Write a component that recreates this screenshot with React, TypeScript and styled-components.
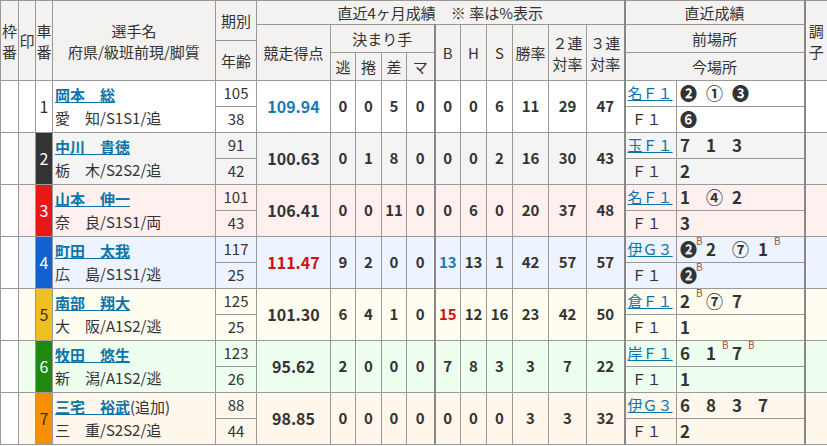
import React from "react";
import styled, { createGlobalStyle } from "styled-components";

const Global = createGlobalStyle`
  body { margin: 0; background: #fff; font-family: "Noto Sans CJK JP", "Noto Sans", sans-serif; }
`;

const Table = styled.table`
  width: 827px;
  border-collapse: collapse;
  table-layout: fixed;
  font-size: 15px;
  color: #333;
  line-height: 1.1;
`;

const Th = styled.th<{ $thick?: boolean }>`
  background: #f3f2f0;
  border: 1px solid #999;
  ${(p) => (p.$thick ? "border-right: 2px solid #888;" : "")}
  font-weight: normal;
  padding: 0;
  text-align: center;
  vertical-align: middle;
  color: #333;
  font-size: 15px;
  line-height: 1.4;
  white-space: nowrap;
`;

const Td = styled.td<{ $bg?: string; $thick?: boolean; $align?: string }>`
  border: 1px solid #999;
  ${(p) => (p.$thick ? "border-right: 2px solid #888;" : "")}
  background: ${(p) => p.$bg || "#fff"};
  padding: 0;
  text-align: ${(p) => p.$align || "center"};
  vertical-align: middle;
  height: 25px;
  white-space: nowrap;
`;

const Num = styled(Td)<{ $color?: string }>`
  font-weight: bold;
  font-size: 15px;
  color: ${(p) => p.$color || "#333"};
`;

const FrameCell = styled(Td)<{ $frame: string; $fg: string }>`
  background: ${(p) => p.$frame};
  color: ${(p) => p.$fg};
  font-size: 16px;
`;

const NameLink = styled.a`
  color: #0b74a8;
  font-weight: bold;
  text-decoration: underline;
`;

const NameBox = styled.div`
  padding-left: 2px;
  display: flex;
  flex-direction: column;
  gap: 6px;
  font-size: 15px;
`;

const Place = styled.a`
  color: #0b74a8;
  text-decoration: underline;
  padding-left: 2px;
`;

const Plain = styled.span`
  padding-left: 6px;
  color: #333;
`;

const Marks = styled.div`
  display: flex;
  padding-left: 3px;
`;

const Mark = styled.span`
  position: relative;
  width: 26px;
  font-weight: bold;
  font-size: 17px;
  color: #333;
  display: inline-block;
`;

const Sup = styled.span`
  position: absolute;
  top: -5px;
  left: 16px;
  font-size: 10px;
  font-weight: normal;
  color: #a0522d;
`;

type MarkT = [string, boolean?];
type Rider = {
  no: number; frame: string; fg: string; bg: string; name: string; extra?: string;
  info: string; term: string; age: string; score: string; scoreColor?: string;
  k: string[]; b: string; h: string; s: string; bColor?: string;
  r1: string; r2: string; r3: string; prev: string; prevM: MarkT[]; curM: MarkT[];
};

const riders: Rider[] = [
  { no: 1, frame: "#fff", fg: "#333", bg: "#fff", name: "岡本　総", info: "愛　知/S1S1/追", term: "105", age: "38", score: "109.94", scoreColor: "#1a7ab0", k: ["0","0","5","0"], b: "0", h: "0", s: "6", r1: "11", r2: "29", r3: "47", prev: "名Ｆ１", prevM: [["❷"],["①"],["❸"]], curM: [["❻"]] },
  { no: 2, frame: "#333", fg: "#fff", bg: "#f4f4f4", name: "中川　貴徳", info: "栃　木/S2S2/追", term: "91", age: "42", score: "100.63", k: ["0","1","8","0"], b: "0", h: "0", s: "2", r1: "16", r2: "30", r3: "43", prev: "玉Ｆ１", prevM: [["7"],["1"],["3"]], curM: [["2"]] },
  { no: 3, frame: "#e61717", fg: "#fff", bg: "#fff0f0", name: "山本　伸一", info: "奈　良/S1S1/両", term: "101", age: "43", score: "106.41", k: ["0","0","11","0"], b: "0", h: "6", s: "0", r1: "20", r2: "37", r3: "48", prev: "名Ｆ１", prevM: [["1"],["④"],["2"]], curM: [["3"]] },
  { no: 4, frame: "#1060d0", fg: "#fff", bg: "#eef4ff", name: "町田　太我", info: "広　島/S1S1/逃", term: "117", age: "25", score: "111.47", scoreColor: "#d01010", k: ["9","2","0","0"], b: "13", bColor: "#1a7ab0", h: "13", s: "1", r1: "42", r2: "57", r3: "57", prev: "伊Ｇ３", prevM: [["❷", true],["2"],["⑦"],["1", true]], curM: [["❷", true]] },
  { no: 5, frame: "#f0c020", fg: "#333", bg: "#fffdf0", name: "南部　翔大", info: "大　阪/A1S2/逃", term: "125", age: "25", score: "101.30", k: ["6","4","1","0"], b: "15", bColor: "#d01010", h: "12", s: "16", r1: "23", r2: "42", r3: "50", prev: "倉Ｆ１", prevM: [["2", true],["⑦"],["7"]], curM: [["1"]] },
  { no: 6, frame: "#20880f", fg: "#fff", bg: "#eefff0", name: "牧田　悠生", info: "新　潟/A1S2/逃", term: "123", age: "26", score: "95.62", k: ["2","0","0","0"], b: "7", h: "8", s: "3", r1: "3", r2: "7", r3: "22", prev: "岸Ｆ１", prevM: [["6"],["1", true],["7", true]], curM: [["1"]] },
  { no: 7, frame: "#f59000", fg: "#333", bg: "#fff7ec", name: "三宅　裕武", extra: "(追加)", info: "三　重/S2S2/追", term: "88", age: "44", score: "98.85", k: ["0","0","0","0"], b: "0", h: "0", s: "0", r1: "3", r2: "3", r3: "32", prev: "伊Ｇ３", prevM: [["6"],["8"],["3"],["7"]], curM: [["2"]] },
];

const MarkList = ({ m }: { m: MarkT[] }) => (
  <Marks>
    {m.map(([t, b], i) => (
      <Mark key={i}>{t}{b && <Sup>B</Sup>}</Mark>
    ))}
  </Marks>
);

const widths = [18, 17, 17, 163, 41, 74, 25, 26, 25, 28, 26, 26, 26, 36, 38, 38, 52, 128, 23];

export default function App() {
  return (
    <>
      <Global />
      <Table>
        <colgroup>
          {widths.map((w, i) => <col key={i} style={{ width: w }} />)}
        </colgroup>
        <thead>
          <tr style={{ height: 24 }}>
            <Th rowSpan={4}>枠<br />番</Th>
            <Th rowSpan={4}>印</Th>
            <Th rowSpan={4}>車<br />番</Th>
            <Th rowSpan={4}>選手名<br />府県/級班前現/脚質</Th>
            <Th rowSpan={2}>期別</Th>
            <Th colSpan={11} $thick>直近4ヶ月成績　※ 率は%表示</Th>
            <Th colSpan={2} $thick>直近成績</Th>
            <Th rowSpan={4}>調<br />子</Th>
          </tr>
          <tr style={{ height: 16 }}>
            <Th rowSpan={3}>競走得点</Th>
            <Th colSpan={4} rowSpan={2} $thick>決まり手</Th>
            <Th rowSpan={3}>B</Th>
            <Th rowSpan={3}>H</Th>
            <Th rowSpan={3}>S</Th>
            <Th rowSpan={3}>勝率</Th>
            <Th rowSpan={3}>２連<br />対率</Th>
            <Th rowSpan={3} $thick>３連<br />対率</Th>
            <Th colSpan={2} rowSpan={2} $thick>前場所</Th>
          </tr>
          <tr style={{ height: 12 }}>
            <Th rowSpan={2}>年齢</Th>
          </tr>
          <tr style={{ height: 28 }}>
            <Th>逃</Th><Th>捲</Th><Th>差</Th><Th $thick>マ</Th>
            <Th colSpan={2} $thick>今場所</Th>
          </tr>
        </thead>
        <tbody>
          {riders.map((r) => (
            <React.Fragment key={r.no}>
              <tr>
                <Td rowSpan={2} />
                <Td rowSpan={2} $bg={r.bg} />
                <FrameCell rowSpan={2} $frame={r.frame} $fg={r.fg}>{r.no}</FrameCell>
                <Td rowSpan={2} $bg={r.bg} $align="left">
                  <NameBox>
                    <span><NameLink>{r.name}</NameLink>{r.extra}</span>
                    <span>{r.info}</span>
                  </NameBox>
                </Td>
                <Td $bg={r.bg}>{r.term}</Td>
                <Num rowSpan={2} $bg={r.bg} $color={r.scoreColor} style={{ fontSize: 16 }}>{r.score}</Num>
                {r.k.map((v, i) => (
                  <Num key={i} rowSpan={2} $bg={r.bg} $thick={i === 3}>{v}</Num>
                ))}
                <Num rowSpan={2} $bg={r.bg} $color={r.bColor}>{r.b}</Num>
                <Num rowSpan={2} $bg={r.bg}>{r.h}</Num>
                <Num rowSpan={2} $bg={r.bg}>{r.s}</Num>
                <Num rowSpan={2} $bg={r.bg}>{r.r1}</Num>
                <Num rowSpan={2} $bg={r.bg}>{r.r2}</Num>
                <Num rowSpan={2} $bg={r.bg} $thick>{r.r3}</Num>
                <Td $bg={r.bg} $align="left"><Place>{r.prev}</Place></Td>
                <Td $bg={r.bg} $align="left" $thick><MarkList m={r.prevM} /></Td>
                <Td rowSpan={2} $bg={r.bg} />
              </tr>
              <tr>
                <Td $bg={r.bg}>{r.age}</Td>
                <Td $bg={r.bg} $align="left"><Plain>Ｆ１</Plain></Td>
                <Td $bg={r.bg} $align="left" $thick><MarkList m={r.curM} /></Td>
              </tr>
            </React.Fragment>
          ))}
        </tbody>
      </Table>
    </>
  );
}
